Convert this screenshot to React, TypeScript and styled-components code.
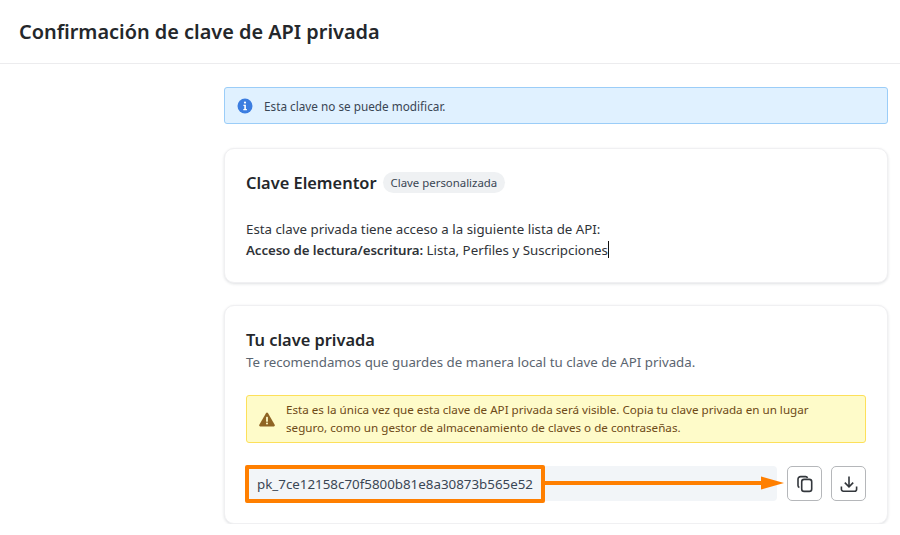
import React from 'react';
import styled, { createGlobalStyle } from 'styled-components';

const GlobalStyle = createGlobalStyle`
  html, body {
    margin: 0;
    padding: 0;
    background: #fff;
    overflow: hidden;
  }
  body {
    font-family: "Noto Sans", "Open Sans", sans-serif;
    color: #202124;
  }
  * {
    box-sizing: border-box;
  }
`;

const Header = styled.header`
  height: 64px;
  padding: 0 19px;
  display: flex;
  align-items: center;
  border-bottom: 1px solid #ececee;
`;

const PageTitle = styled.h1`
  margin: 0 0 -1px;
  font-size: 19.9px;
  line-height: 28px;
  font-weight: 600;
  color: #24272b;
`;

const Main = styled.main`
  margin: 23px 12px 0 224px;
  display: flex;
  flex-direction: column;
`;

const InfoAlert = styled.div`
  height: 37px;
  padding: 0 12px;
  display: flex;
  align-items: center;
  gap: 11px;
  background: #e0f1ff;
  border: 1px solid #9bcdf8;
  border-radius: 3px;
  font-size: 11.75px;
  color: #3a4654;
`;

const Card = styled.section<{ $height: number; $top: number }>`
  height: ${p => p.$height}px;
  margin-top: ${p => p.$top}px;
  padding: 0 21px;
  background: #fff;
  border: 1px solid #f0f0f2;
  border-radius: 10px;
  box-shadow: 0 1px 3px rgba(30, 40, 60, 0.14);
`;

const TitleRow = styled.div`
  margin-top: 22px;
  height: 24px;
  display: flex;
  align-items: center;
  gap: 6px;
`;

const CardTitle = styled.h2`
  margin: 0;
  font-size: 16.4px;
  line-height: 24px;
  font-weight: 600;
  color: #24272b;
`;

const Badge = styled.span`
  height: 21px;
  margin-top: -1px;
  padding: 0 8px;
  display: inline-flex;
  align-items: center;
  background: #eff1f3;
  border-radius: 11px;
  font-size: 11.4px;
  color: #3a4654;
`;

const Body = styled.p`
  margin: 24px 0 0;
  font-size: 13.3px;
  line-height: 21px;
  color: #2f3338;

  strong {
    font-weight: 600;
    letter-spacing: -0.1px;
  }
`;

const Caret = styled.span`
  display: inline-block;
  width: 1px;
  height: 17px;
  margin-bottom: -3px;
  background: #111;
`;

const Subtitle = styled.p`
  margin: 0;
  font-size: 13.3px;
  line-height: 20px;
  color: #5b6570;
`;

const WarningAlert = styled.div`
  height: 48px;
  margin-top: 23px;
  padding: 0 12px;
  display: flex;
  align-items: center;
  gap: 11px;
  background: #fefbc9;
  border: 1px solid #fde05a;
  border-radius: 3px;
  font-size: 11.65px;
  line-height: 18px;
  color: #6e4a17;
`;

const KeyRow = styled.div`
  position: relative;
  margin-top: 23px;
  display: flex;
  gap: 9px;
`;

const KeyField = styled.div`
  flex: 1;
  height: 35px;
  margin-right: 1px;
  padding: 0 11px;
  display: flex;
  align-items: center;
  background: #f2f5f8;
  border-radius: 4px;
  font-size: 13.35px;
  color: #3a4654;
`;

const IconButton = styled.button`
  width: 35px;
  height: 35px;
  padding: 0;
  display: flex;
  align-items: center;
  justify-content: center;
  background: #fff;
  border: 1px solid #b5b7ba;
  border-radius: 5px;
  color: #33373c;
`;

const Highlight = styled.div`
  position: absolute;
  left: -1px;
  top: -1px;
  width: 300px;
  height: 38px;
  border: 4px solid #ff7f00;
  border-radius: 2px;
`;

const Arrow = styled.svg`
  position: absolute;
  left: 298px;
  top: 6px;
`;

const InfoIcon = () => (
  <svg width="16" height="16" viewBox="0 0 16 16">
    <circle cx="8" cy="8" r="7.5" fill="#3b7de0" />
    <circle cx="8" cy="4.6" r="1.1" fill="#fff" />
    <path d="M6.4 6.8h2.5v4.3h1v1.2H6.3v-1.2h1V8H6.4z" fill="#fff" />
  </svg>
);

const WarningIcon = () => (
  <svg width="16" height="15" viewBox="0 0 16 15">
    <path d="M8 .6c.4 0 .7.2.9.5l6.8 11.7c.4.7-.1 1.6-.9 1.6H1.2c-.8 0-1.3-.9-.9-1.6L7.1 1.1C7.3.8 7.6.6 8 .6z" fill="#8f6424" />
    <rect x="7.1" y="4.8" width="1.8" height="5" rx=".6" fill="#fefbc9" />
    <circle cx="8" cy="11.6" r="1" fill="#fefbc9" />
  </svg>
);

const CopyIcon = () => (
  <svg width="18" height="18" viewBox="0 0 18 18" fill="none" stroke="currentColor" strokeWidth="1.6">
    <rect x="5.7" y="4.4" width="10" height="12" rx="2.4" />
    <path d="M3.4 12.4A2.2 2.2 0 0 1 2 10.4V4.2A2.6 2.6 0 0 1 4.6 1.6h5a2.2 2.2 0 0 1 2 1.3" />
  </svg>
);

const DownloadIcon = () => (
  <svg width="18" height="18" viewBox="0 0 18 18" fill="none" stroke="currentColor" strokeWidth="1.6">
    <path d="M9 1.5v10.2M4.8 7.6 9 11.8l4.2-4.2" />
    <path d="M1.4 11.4v2.8a2 2 0 0 0 2 2h11.2a2 2 0 0 0 2-2v-2.8" />
  </svg>
);

export default function App() {
  return (
    <>
      <GlobalStyle />
      <Header>
        <PageTitle>Confirmación de clave de API privada</PageTitle>
      </Header>
      <Main>
        <InfoAlert>
          <InfoIcon />
          Esta clave no se puede modificar.
        </InfoAlert>

        <Card $height={135} $top={24}>
          <TitleRow>
            <CardTitle>Clave Elementor</CardTitle>
            <Badge>Clave personalizada</Badge>
          </TitleRow>
          <Body>
            Esta clave privada tiene acceso a la siguiente lista de API:
            <br />
            <strong>Acceso de lectura/escritura:</strong> Lista, Perfiles y Suscripciones
            <Caret />
          </Body>
        </Card>

        <Card $height={219} $top={22}>
          <TitleRow>
            <CardTitle>Tu clave privada</CardTitle>
          </TitleRow>
          <Subtitle>Te recomendamos que guardes de manera local tu clave de API privada.</Subtitle>
          <WarningAlert>
            <WarningIcon />
            <span>
              Esta es la única vez que esta clave de API privada será visible. Copia tu clave privada en un lugar
              <br />
              seguro, como un gestor de almacenamiento de claves o de contraseñas.
            </span>
          </WarningAlert>
          <KeyRow>
            <KeyField>pk_7ce12158c70f5800b81e8a30873b565e52</KeyField>
            <IconButton aria-label="Copiar">
              <CopyIcon />
            </IconButton>
            <IconButton aria-label="Descargar">
              <DownloadIcon />
            </IconButton>
            <Highlight />
            <Arrow width="240" height="22" viewBox="0 0 240 22">
              <path d="M0 9h218v4H0z" fill="#ff7f00" />
              <path d="M217 4.5l23 6.5-23 6.5z" fill="#ff7f00" />
            </Arrow>
          </KeyRow>
        </Card>
      </Main>
    </>
  );
}
